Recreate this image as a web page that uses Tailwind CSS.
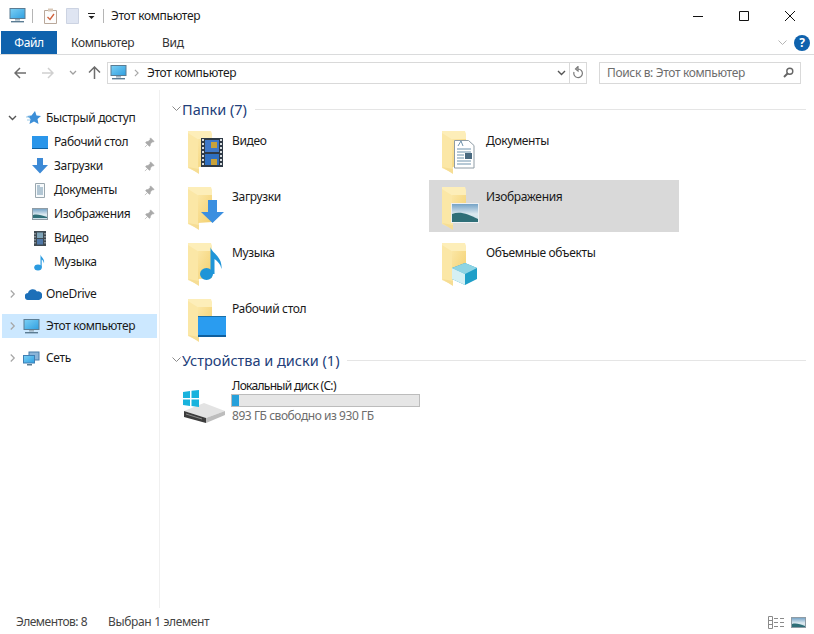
<!DOCTYPE html>
<html lang="ru">
<head>
  <meta charset="UTF-8" />
  <title>Этот компьютер</title>
  <script src="https://cdn.jsdelivr.net/npm/@tailwindcss/browser@4"></script>
</head>
<body class="bg-white text-[#1a1a1a] font-['Noto_Sans','Open_Sans',sans-serif] text-[12px] tracking-[-0.35px] leading-none overflow-hidden">

<svg width="0" height="0" class="absolute">
  <defs>
    <linearGradient id="fold" x1="0" y1="0" x2="1" y2="1">
      <stop offset="0" stop-color="#fbe6a4"/><stop offset="1" stop-color="#f3cf6e"/>
    </linearGradient>
    <linearGradient id="screen" x1="0" y1="0" x2="1" y2="1">
      <stop offset="0" stop-color="#7cd0f5"/><stop offset="1" stop-color="#2f9fe0"/>
    </linearGradient>
    <linearGradient id="photo" x1="0" y1="0" x2="0" y2="1">
      <stop offset="0" stop-color="#6f9fc4"/><stop offset=".55" stop-color="#dce9f0"/><stop offset="1" stop-color="#c8dde6"/>
    </linearGradient>
    <symbol id="folder" viewBox="0 0 36 44">
      <path d="M1 1h23l1 3v32L1 36z" fill="#fdeeb9"/>
      <path d="M1 3l11 7v33L1 38z" fill="#fbe7a6"/>
      <path d="M11 9h14v27l-14 1z" fill="url(#fold)"/>
      <path d="M1 37l11 7V39z" fill="#f6dd94"/>
    </symbol>
    <symbol id="monitor" viewBox="0 0 17 15">
      <rect x="1" y=".5" width="15" height="10" fill="url(#screen)" stroke="#5b7c93"/>
      <path d="M6 11h5v1.6H6z" fill="#9fb3c0"/>
      <path d="M2 13h13v1.4H2z" fill="#5b7c93"/>
    </symbol>
    <symbol id="chevR" viewBox="0 0 8 10">
      <path d="M2 1l4 4-4 4" fill="none" stroke="#a6a6a6" stroke-width="1.4"/>
    </symbol>
    <symbol id="pin" viewBox="0 0 10 10">
      <path d="M6 .8l3.2 3.2-1 .6-.5-.2L5.800 6.300 5.600 8 4.800 8.500 1.500 5.200 2 4.400l1.700-.2 1.900-1.900-.2-.5zM3 7L.8 9.200" fill="#a9a9a9" stroke="#a9a9a9" stroke-width=".6"/>
    </symbol>
  </defs>
</svg>

<div class="flex flex-col h-[634px] w-[814px]">

  <!-- title bar -->
  <div class="h-[31px] flex items-center relative">
    <svg class="ml-[9px] w-[17px] h-[15px]"><use href="#monitor"/></svg>
    <div class="ml-[6px] w-px h-[14px] bg-[#b5b5b5]"></div>
    <svg class="ml-[11px] w-[13px] h-[16px]" viewBox="0 0 13 16"><path d="M.5 2.500h12v13H.5z" fill="#fdfdfd" stroke="#b9a89a"/><path d="M4 .5h5v3H4z" fill="#d8c8b8"/><path d="M3.500 9l2.500 2.500L10 6" fill="none" stroke="#d0603a" stroke-width="1.300"/></svg>
    <svg class="ml-[9px] w-[13px] h-[16px]" viewBox="0 0 13 16"><path d="M.5.500h12v15H.5z" fill="#dfe5f2" stroke="#ccd3e2"/></svg>
    <svg class="ml-[9px] w-[7px] h-[8px]" viewBox="0 0 7 8"><path d="M0 1h7v1H0zM.5 4h6L3.500 7z" fill="#222"/></svg>
    <div class="ml-[8px] w-px h-[14px] bg-[#b5b5b5]"></div>
    <span class="ml-[7px]">Этот компьютер</span>
    <div class="ml-auto flex items-center pr-[19px] gap-[36px]">
      <svg class="w-[10px] h-[10px]" viewBox="0 0 10 10"><path d="M0 5.500h10" stroke="#111" stroke-width="1"/></svg>
      <svg class="w-[10px] h-[10px]" viewBox="0 0 10 10"><path d="M.5.500h9v9h-9z" fill="none" stroke="#111"/></svg>
      <svg class="w-[10px] h-[10px]" viewBox="0 0 10 10"><path d="M0 0l10 10M10 0L0 10" stroke="#111"/></svg>
    </div>
  </div>

  <!-- ribbon tabs -->
  <div class="h-[24px] flex items-stretch border-b border-[#dadbdc] pl-px">
    <div class="w-[56px] bg-[#0f62ad] text-white flex items-center justify-center">Файл</div>
    <div class="ml-[14px] flex items-center text-[#333]">Компьютер</div>
    <div class="ml-[28px] flex items-center text-[#333]">Вид</div>
    <div class="ml-auto flex items-center pr-[4px] gap-[7px]">
      <svg class="w-[9px] h-[6px]" viewBox="0 0 9 6"><path d="M.5.500l4 4 4-4" fill="none" stroke="#b5b5b5"/></svg>
      <div class="w-[16px] h-[16px] rounded-full bg-[#0f62ad] text-white font-bold text-[12px] flex items-center justify-center">?</div>
    </div>
  </div>

  <!-- address bar -->
  <div class="h-[35px] flex items-center">
    <svg class="ml-[14px] w-[12px] h-[12px]" viewBox="0 0 12 12"><path d="M6 1L1 6l5 5M1 6h11" fill="none" stroke="#6d6d6d" stroke-width="1.500"/></svg>
    <svg class="ml-[16px] w-[12px] h-[12px]" viewBox="0 0 12 12"><path d="M6 1l5 5-5 5M11 6H0" fill="none" stroke="#d0d0d0" stroke-width="1.500"/></svg>
    <svg class="ml-[15px] w-[8px] h-[6px]" viewBox="0 0 8 6"><path d="M1 1l3 3 3-3" fill="none" stroke="#a0a0a0" stroke-width="1.300"/></svg>
    <svg class="ml-[11px] w-[13px] h-[13px]" viewBox="0 0 13 13"><path d="M1 6.500l5.500-5.500 5.500 5.500M6.500 1v12" fill="none" stroke="#6d6d6d" stroke-width="1.500"/></svg>
    <div class="ml-[6px] w-[480px] h-[22px] border border-[#d9d9d9] flex items-center">
      <svg class="ml-[2px] w-[17px] h-[15px]"><use href="#monitor"/></svg>
      <svg class="ml-[6px] w-[7px] h-[8px]"><use href="#chevR"/></svg>
      <span class="ml-[7px]">Этот компьютер</span>
      <svg class="ml-auto w-[9px] h-[6px]" viewBox="0 0 9 6"><path d="M1 1l3.500 3.500L8 1" fill="none" stroke="#555" stroke-width="1.400"/></svg>
      <div class="ml-[3px] w-px h-[20px] bg-[#d9d9d9]"></div>
      <svg class="ml-[2px] mr-[2px] w-[12px] h-[13px]" viewBox="0 0 12 13"><path d="M6 3a4.300 4.300 0 1 1-4 3M6 .5V5L3.500 3z" fill="none" stroke="#7a7a7a" stroke-width="1.200"/></svg>
    </div>
    <div class="ml-[12px] w-[202px] h-[22px] border border-[#d9d9d9] flex items-center pl-[7px] pr-[6px] text-[#6d6d6d]">
      <span>Поиск в: Этот компьютер</span>
      <svg class="ml-auto w-[11px] h-[11px]" viewBox="0 0 11 11"><circle cx="6.800" cy="4.200" r="3" fill="none" stroke="#666" stroke-width="1.400"/><path d="M4.800 6.300L1 10" stroke="#666" stroke-width="2"/></svg>
    </div>
  </div>

  <div class="flex-1 flex min-h-0">
    <!-- nav pane -->
    <nav class="w-[160px] border-r border-[#f0f0f0] pt-[16px] pl-[2px] pr-[2px] flex flex-col">
      <div class="h-[24px] flex items-center">
        <svg class="ml-[6px] w-[9px] h-[6px]" viewBox="0 0 9 6"><path d="M1 1l3.500 3.500L8 1" fill="none" stroke="#555" stroke-width="1.400"/></svg>
        <svg class="ml-[9px] w-[15px] h-[14px]" viewBox="0 0 15 14"><path d="M9 0l1.500 4.500L15 5l-3.500 3 1 5L8 10.500 3.500 13l1-5L1 5l4.500-.5z" fill="#3c8fd8"/><path d="M0 6h4M1 9h3" stroke="#9ccbe8"/></svg>
        <span class="ml-[5px]">Быстрый доступ</span>
      </div>

      <div class="h-[24px] flex items-center pl-[30px]">
        <svg class="w-[16px] h-[13px]" viewBox="0 0 16 13"><rect width="16" height="13" fill="#2a96ea"/><path d="M0 12h16v1H0z" fill="#0f5f9e"/></svg>
        <span class="ml-[6px]">Рабочий стол</span>
        <svg class="ml-auto mr-[2px] w-[11px] h-[11px]"><use href="#pin"/></svg>
      </div>
      <div class="h-[24px] flex items-center pl-[30px]">
        <svg class="w-[16px] h-[16px]" viewBox="0 0 16 16"><path d="M5 0h6v7h5l-8 8.500L0 7h5z" fill="#3d8ad6"/></svg>
        <span class="ml-[6px]">Загрузки</span>
        <svg class="ml-auto mr-[2px] w-[11px] h-[11px]"><use href="#pin"/></svg>
      </div>
      <div class="h-[24px] flex items-center pl-[30px]">
        <svg class="w-[16px] h-[15px]" viewBox="0 0 16 15"><path d="M3.500.5h9v14h-9z" fill="#f7fafc" stroke="#9aa7ae"/><path d="M5 3h3M5 5h6M5 7h6M5 9h6M5 11h6" stroke="#6f93ac"/></svg>
        <span class="ml-[6px]">Документы</span>
        <svg class="ml-auto mr-[2px] w-[11px] h-[11px]"><use href="#pin"/></svg>
      </div>
      <div class="h-[24px] flex items-center pl-[30px]">
        <svg class="w-[16px] h-[12px]" viewBox="0 0 16 12"><rect x=".5" y=".5" width="15" height="11" fill="url(#photo)" stroke="#8f9ca5"/><path d="M1 10V7c4-1 8 0 14 2v1z" fill="#2f6f78"/></svg>
        <span class="ml-[6px]">Изображения</span>
        <svg class="ml-auto mr-[2px] w-[11px] h-[11px]"><use href="#pin"/></svg>
      </div>
      <div class="h-[24px] flex items-center pl-[30px]">
        <svg class="w-[16px] h-[15px]" viewBox="0 0 16 15"><rect x="2" width="12" height="15" fill="#3f4a52"/><rect x="5" y="1.500" width="6" height="5.500" fill="#7fa4b8"/><rect x="5" y="8" width="6" height="5.500" fill="#4f78a8"/><path d="M3 2v11M13 2v11" stroke="#c9d2d8" stroke-dasharray="1.500 1.500"/></svg>
        <span class="ml-[6px]">Видео</span>
      </div>
      <div class="h-[24px] flex items-center pl-[30px]">
        <svg class="w-[16px] h-[18px]" viewBox="0 0 16 18"><ellipse cx="6" cy="14.500" rx="3.800" ry="3" fill="#2b9be0"/><path d="M8.500 14.500V1.500c.5 3 4.500 4 3.500 9-.5-2.500-1.500-3.500-2.300-4v8z" fill="#2b9be0"/></svg>
        <span class="ml-[6px]">Музыка</span>
      </div>

      <div class="h-[24px] mt-[8px] flex items-center">
        <svg class="ml-[7px] w-[7px] h-[10px]"><use href="#chevR"/></svg>
        <svg class="ml-[9px] w-[17px] h-[11px]" viewBox="0 0 17 11"><path d="M3.500 11a3.500 3.500 0 0 1-.5-7 5 5 0 0 1 9-1.500A4 4 0 0 1 14 11z" fill="#1c6fb8"/></svg>
        <span class="ml-[4px]">OneDrive</span>
      </div>
      <div class="h-[24px] mt-[8px] flex items-center bg-[#cce8ff]">
        <svg class="ml-[7px] w-[7px] h-[10px]"><use href="#chevR"/></svg>
        <svg class="ml-[7px] w-[17px] h-[15px]"><use href="#monitor"/></svg>
        <span class="ml-[6px]">Этот компьютер</span>
      </div>
      <div class="h-[24px] mt-[8px] flex items-center">
        <svg class="ml-[7px] w-[7px] h-[10px]"><use href="#chevR"/></svg>
        <svg class="ml-[7px] w-[17px] h-[15px]" viewBox="0 0 17 15"><rect x="6" y="1" width="10" height="8" fill="#8bb4d8" stroke="#4a7ca8"/><rect x=".5" y="4.500" width="11" height="7.500" fill="url(#screen)" stroke="#3f7fb4"/><path d="M4 13h5v1.500H4z" fill="#5b7c93"/></svg>
        <span class="ml-[6px]">Сеть</span>
      </div>
    </nav>

    <!-- content -->
    <main class="flex-1 pl-[10px] pr-[8px] pt-[9px] flex flex-col">
      <div class="h-[20px] flex items-center">
        <svg class="ml-[2px] w-[9px] h-[6px]" viewBox="0 0 9 6"><path d="M.5.500l4 4 4-4" fill="none" stroke="#8a8a8a"/></svg>
        <span class="ml-[1px] text-[14.5px] tracking-normal text-[#23407a]">Папки (7)</span>
        <div class="ml-[8px] flex-1 h-px bg-[#e5e5e5]"></div>
      </div>

      <div class="mt-[5px] ml-[5px] grid grid-cols-[250px_250px] gap-x-[4px] gap-y-[4px]">
        <div class="h-[52px] flex pl-[12px]">
          <svg class="mt-[6px] w-[36px] h-[44px]" viewBox="0 0 36 44"><use href="#folder" width="36" height="44"/><rect x="14" y="8" width="22" height="29" fill="#2f3a46"/><rect x="18" y="10" width="14" height="12" fill="#3f78c8"/><rect x="18" y="24" width="14" height="11" fill="#2f6fc0"/><path d="M24 12h6v6h-6zM24 29h6v6h-6z" fill="#c9a23a"/><path d="M16 9v27M34 9v27" stroke="#d8dde0" stroke-width="2" stroke-dasharray="2 2"/></svg>
          <span class="ml-[9px] mt-[11px]">Видео</span>
        </div>
        <div class="h-[52px] flex pl-[12px]">
          <svg class="mt-[6px] w-[36px] h-[44px]" viewBox="0 0 36 44"><use href="#folder" width="36" height="44"/><path d="M13.500 10.500h14l5.500 5V38h-19.500z" fill="#fff" stroke="#8f9ca5"/><path d="M17 16l3-5 2 5M16 19h14M16 22h14M16 25h7M16 28h7M16 31h14M16 34h14" fill="none" stroke="#6f93ac"/><rect x="24" y="23" width="7" height="6" fill="#4a6a80"/></svg>
          <span class="ml-[9px] mt-[11px]">Документы</span>
        </div>
        <div class="h-[52px] flex pl-[12px]">
          <svg class="mt-[6px] w-[38px] h-[44px]" viewBox="0 0 38 44"><use href="#folder" width="36" height="44"/><path d="M21 14h9v12h7L25.500 37 14 26h7z" fill="#3b8fe0"/></svg>
          <span class="ml-[7px] mt-[11px]">Загрузки</span>
        </div>
        <div class="h-[52px] flex pl-[12px] bg-[#d9d9d9]">
          <svg class="mt-[6px] w-[38px] h-[44px]" viewBox="0 0 38 44"><use href="#folder" width="36" height="44"/><rect x="10.500" y="17.500" width="27" height="19" fill="url(#photo)" stroke="#eef0f2"/><path d="M11 36v-8c8-3 16 0 26 5v3z" fill="#2f6f78"/></svg>
          <span class="ml-[7px] mt-[11px]">Изображения</span>
        </div>
        <div class="h-[52px] flex pl-[12px]">
          <svg class="mt-[6px] w-[36px] h-[44px]" viewBox="0 0 36 44"><use href="#folder" width="36" height="44"/><ellipse cx="19.500" cy="32" rx="6.500" ry="6" fill="#1f95d8"/><path d="M23.500 32V5c1 6 12 9 11 22-1-5-4-8-7-10v15z" fill="#1f95d8"/></svg>
          <span class="ml-[9px] mt-[11px]">Музыка</span>
        </div>
        <div class="h-[52px] flex pl-[12px]">
          <svg class="mt-[6px] w-[36px] h-[44px]" viewBox="0 0 36 44"><use href="#folder" width="36" height="44"/><path d="M24 21l12 5v11l-12 6-13-6V26z" fill="#1f9fc8"/><path d="M11 26l13-5 12 5-12 6z" fill="#8ed4e4"/><path d="M11 26l13 6v11l-13-6z" fill="#d5f0f4"/></svg>
          <span class="ml-[9px] mt-[11px]">Объемные объекты</span>
        </div>
        <div class="h-[52px] flex pl-[12px]">
          <svg class="mt-[6px] w-[40px] h-[44px]" viewBox="0 0 40 44"><use href="#folder" width="36" height="44"/><rect x="11" y="18" width="28" height="20" fill="#2a9cf0"/><path d="M11 18h28v1H11z" fill="#1a6fa8"/><path d="M11 37h28v2H11z" fill="#0f5f9e"/></svg>
          <span class="ml-[5px] mt-[11px]">Рабочий стол</span>
        </div>
      </div>

      <div class="mt-[6px] h-[20px] flex items-center">
        <svg class="ml-[2px] w-[9px] h-[6px]" viewBox="0 0 9 6"><path d="M.5.500l4 4 4-4" fill="none" stroke="#8a8a8a"/></svg>
        <span class="ml-[1px] text-[14.5px] tracking-normal text-[#23407a]">Устройства и диски (1)</span>
        <div class="ml-[8px] flex-1 h-px bg-[#e5e5e5]"></div>
      </div>

      <div class="mt-[9px] flex pl-[12px]">
        <svg class="mt-[11px] w-[44px] h-[33px]" viewBox="0 0 44 33"><path d="M2 21l20-8 21 8-19 7z" fill="#e3e3e3"/><path d="M2 21l22 7v5L2 27z" fill="#3c3c3c"/><path d="M24 28l19-7v4l-19 8z" fill="#bdbdbd"/><path d="M4 24l16 5" stroke="#8a8a8a"/><path d="M1 2l7-1v7H1zM9.500 .8L17 0v8H9.500zM1 9.500h7V16l-7-1zM9.500 9.500H17V17l-7.500-1z" fill="#19b3dd"/></svg>
        <div class="ml-[5px] flex flex-col">
          <span class="pl-px h-[13px] flex items-center tracking-[-0.7px]">Локальный диск (C:)</span>
          <div class="mt-[2px] w-[189px] h-[13px] border border-[#bcbcbc] bg-[#e6e6e6]">
            <div class="w-[7px] h-full bg-[#26a0da]"></div>
          </div>
          <span class="pl-px mt-[1px] h-[16px] flex items-center tracking-[-0.45px] text-[#6d6d6d]">893 ГБ свободно из 930 ГБ</span>
        </div>
      </div>
    </main>
  </div>

  <!-- status bar -->
  <div class="h-[26px] flex items-center pt-[2px] text-[#444]">
    <span class="ml-[16px] tracking-[-0.5px]">Элементов: 8</span>
    <span class="ml-[21px]">Выбран 1 элемент</span>
    <div class="ml-auto flex items-center pr-[8px] gap-[6px]">
      <svg class="w-[17px] h-[13px]" viewBox="0 0 17 13"><path d="M.5.500h4v12h-4zM.5 4.500h4M.5 8.500h4M6 2.500h4M12 2.500h4M6 6.500h4M12 6.500h4M6 10.500h4M12 10.500h4" fill="none" stroke="#8a8a8a"/></svg>
      <svg class="w-[15px] h-[11px]" viewBox="0 0 15 11"><rect x=".5" y=".5" width="14" height="10" fill="url(#photo)" stroke="#8f9ca5"/><path d="M1 10V7c4-1 8 0 13 2v1z" fill="#2f6f78"/></svg>
    </div>
  </div>
</div>
</body>
</html>
